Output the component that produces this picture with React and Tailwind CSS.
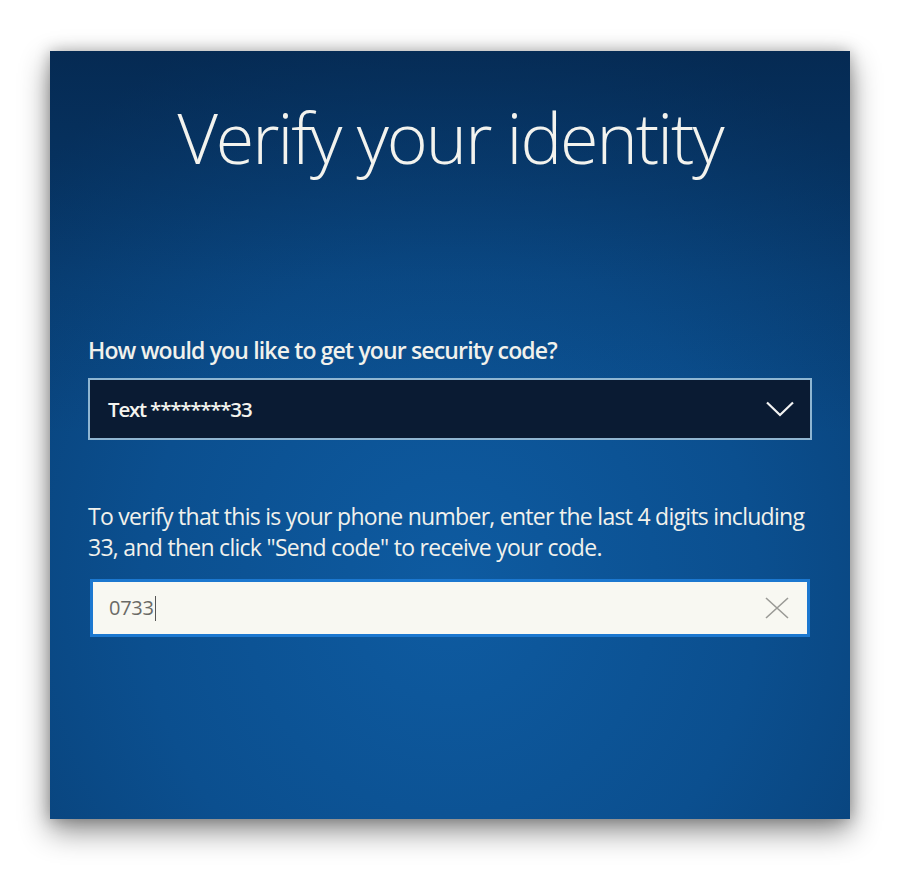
export default function App() {
  return (
    <div className="w-[900px] h-[873px] bg-white pt-[51px] pl-[50px]" style={{ fontFamily: '"Open Sans", "Noto Sans", sans-serif' }}>
      <div className="relative w-[800px] h-[768px] shadow-[0_12px_28px_rgba(0,0,0,0.45),0_0_14px_rgba(0,0,0,0.25)] bg-[radial-gradient(ellipse_70%_80%_at_50%_70%,#0e5ba1_0%,#0b4f8f_55%,#083f75_100%)] overflow-hidden">
        <div className="absolute inset-0 bg-[linear-gradient(to_bottom,rgba(3,25,55,0.55)_0%,rgba(3,25,55,0.15)_30%,rgba(0,0,0,0)_50%)]"></div>
        <div className="relative flex flex-col px-[38px]">
          <h1 className="mt-[41px] text-center text-[70px] font-light text-[#f3f3ee] tracking-[-2px] leading-[90px]">Verify your identity</h1>
          <p className="mt-[153px] text-[23px] font-semibold text-[#f1f1ec] tracking-[-0.85px] leading-[30px]">How would you like to get your security code?</p>
          <div className="mt-[13px] h-[62px] w-[724px] border-[2px] border-[#8fb6d2] bg-[#0a1b33] flex items-center justify-between pl-[18px] pr-[16px]">
            <span className="text-[20.5px] font-semibold text-[#f4f4ef] tracking-[-1.2px]">Text ********33</span>
            <svg width="28" height="16" viewBox="0 0 28 16" fill="none" stroke="#f2f2f2" strokeWidth="2.2">
              <path d="M1 1.5 L14 14 L27 1.5" />
            </svg>
          </div>
          <p className="mt-[61px] text-[23px] text-[#f1f1ec] tracking-[-0.72px] leading-[31px] w-[730px]">
            To verify that this is your phone number, enter the last 4 digits including 33, and then click "Send code" to receive your code.
          </p>
          <div className="mt-[16px] ml-[2px] h-[58px] w-[720px] border-[3px] border-[#1c78d0] bg-[#f8f8f2] flex items-center justify-between pl-[16px] pr-[18px]">
            <span className="flex items-center text-[20px] text-[#6a6a66] tracking-[-0.3px]">0733<span className="inline-block w-[1.5px] h-[25px] bg-[#555] ml-[1px]"></span></span>
            <svg width="24" height="22" viewBox="0 0 24 22" fill="none" stroke="#9a9a96" strokeWidth="1.6">
              <path d="M1 1 L23 21 M23 1 L1 21" />
            </svg>
          </div>
        </div>
      </div>
    </div>
  );
}
